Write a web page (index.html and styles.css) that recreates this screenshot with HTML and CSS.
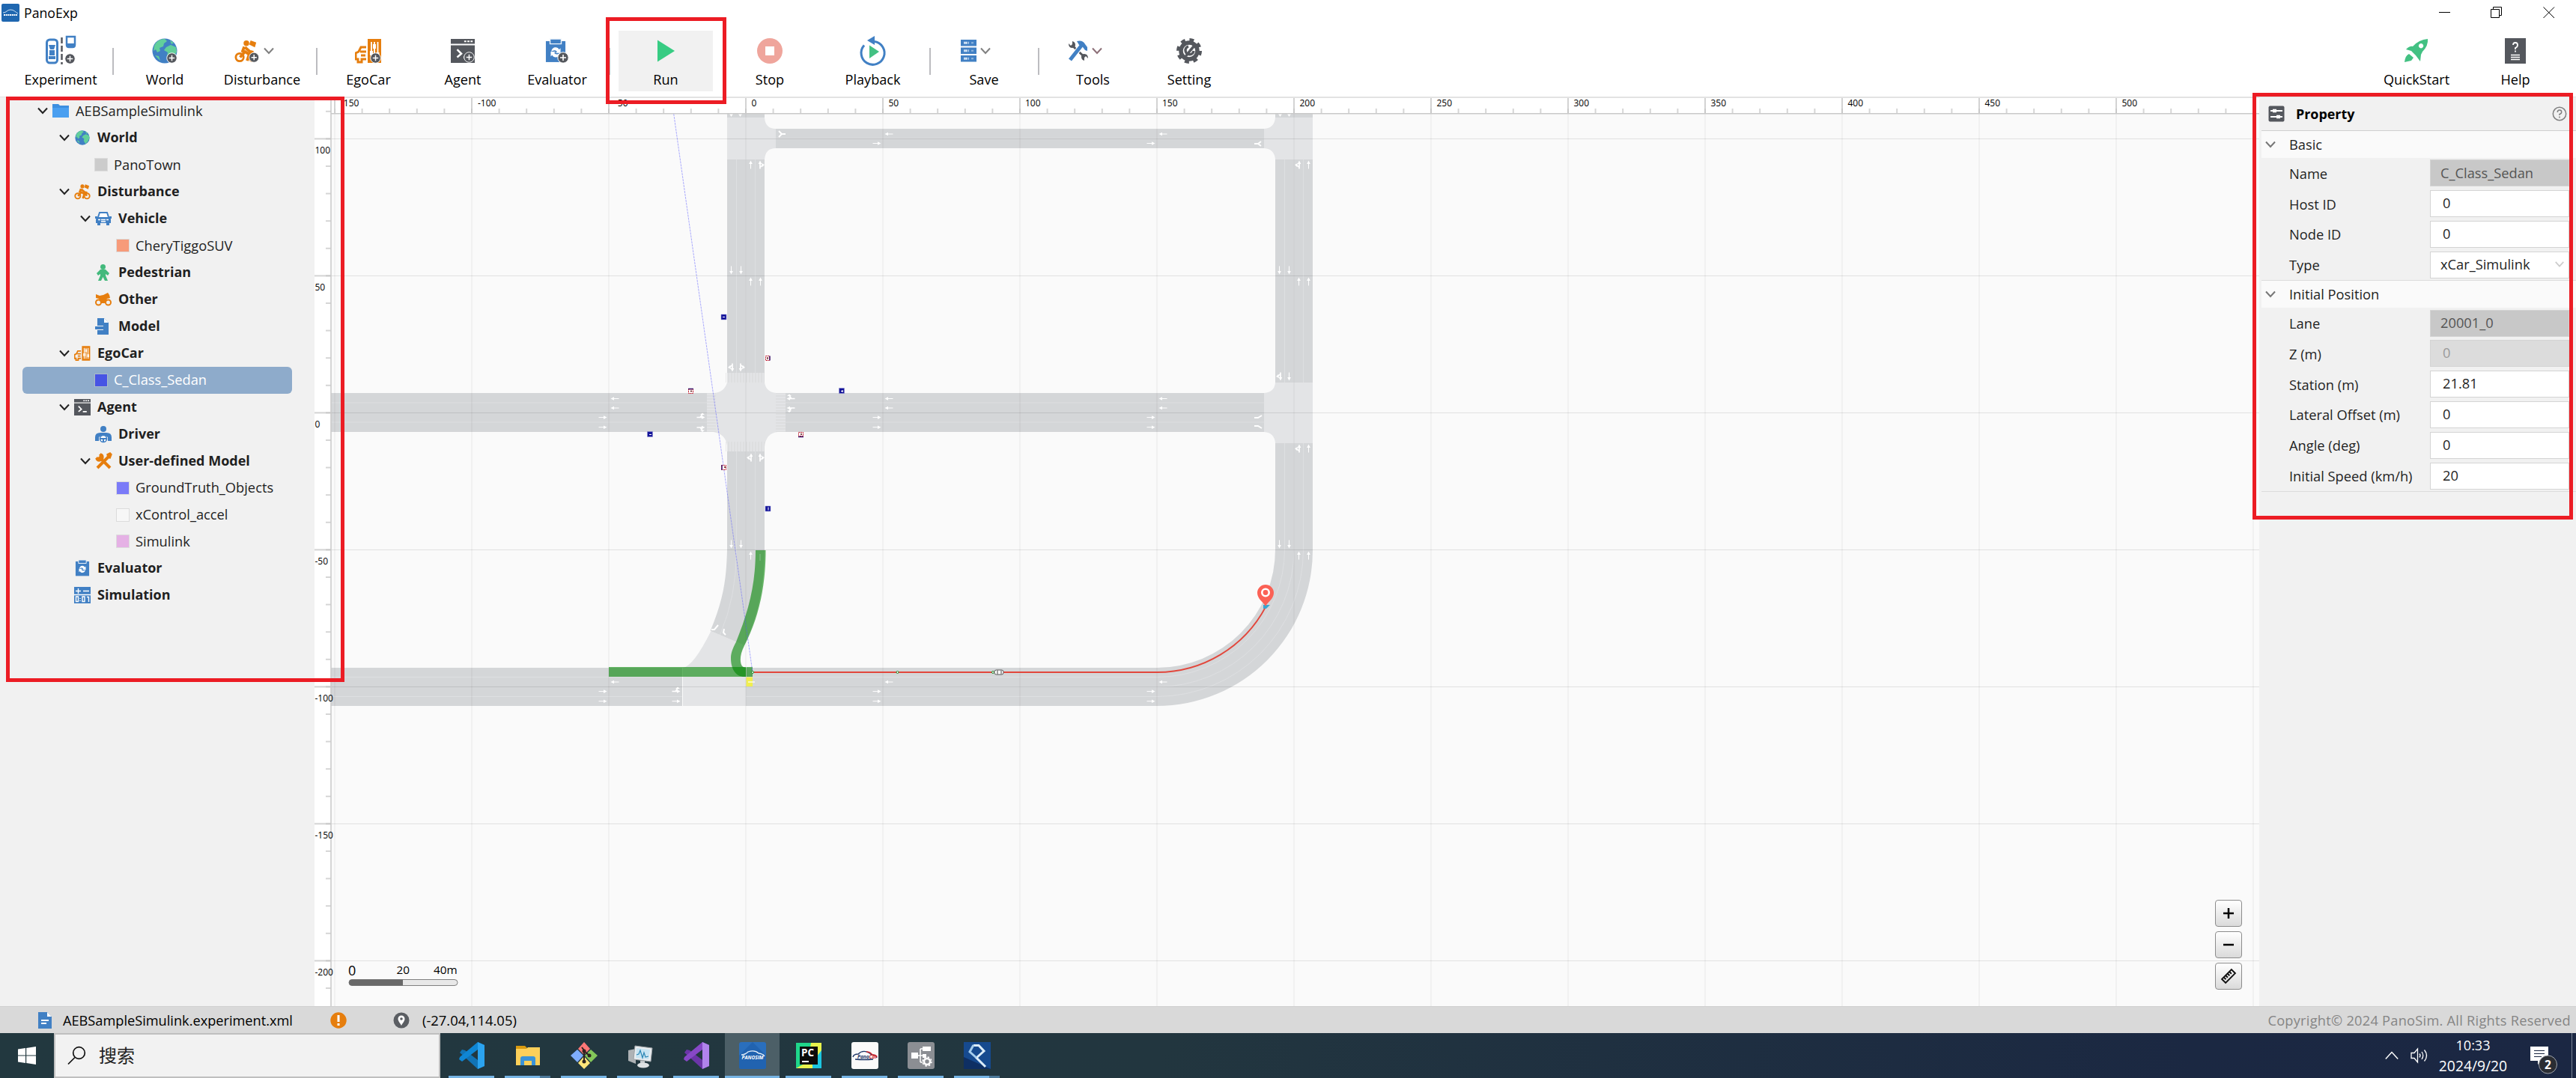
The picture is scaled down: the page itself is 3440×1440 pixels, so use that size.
FILE: index.html
```html
<!DOCTYPE html>
<html lang="en">
<head>
<meta charset="utf-8">
<title>PanoExp</title>
<link rel="stylesheet" href="styles.css">
</head>
<body>
<!-- Shared icon shapes -->
<svg class="defs" aria-hidden="true">
  <defs>
    <symbol id="globe" viewBox="0 0 34 34"><circle cx="17" cy="17" r="16.5" fill="#4180c4"/><path d="M3 10C6 4 11 1 17 1l3 3-4 3-1 4-5 2 1 4-4 2-2-4-3 2zM19 12l6-3 7 3 1 6-4 8-5 5-4-7 1-5-5-3zM24 3l5 3-3 2zM4 23l5 1 2 6z" fill="#62cf9b"/></symbol>
    <symbol id="plus" viewBox="0 0 16 16"><circle cx="8" cy="8" r="7.2" fill="#54575d" stroke="#fff"/><path d="M8 4v8M4 8h8" stroke="#fff" stroke-width="1.6"/></symbol>
    <symbol id="chev" viewBox="0 0 16 16"><path d="M2 4.500 8 11l6-6.500" fill="none" stroke="currentColor" stroke-width="2"/></symbol>
    <symbol id="cyclist" viewBox="0 0 34 34"><g fill="none" stroke="#e67e0e"><circle cx="7.500" cy="26" r="5.500" stroke-width="3"/><circle cx="26.500" cy="26" r="5.500" stroke-width="3"/><path d="M8 26l7-8 6 4-3 9M14 11l-3 8M15 12l7 6 5 1M26 26l-4-9" stroke-width="4" stroke-linejoin="round"/></g><circle cx="17" cy="6" r="4" fill="#e67e0e"/><path d="m23 2 8 3-2 7-8-4z" fill="#e67e0e"/></symbol>
    <symbol id="ego" viewBox="0 0 36 34"><path d="M17 1h18v32H17z" fill="#e67e0e"/><path d="M15 12H8L5 18l-4 2v8h3v4h5v-4h6M7 18h8M8 23h6" fill="none" stroke="#e67e0e" stroke-width="3"/><path d="M22 5v24M26 5v24M30.500 5v24" stroke="#fff" stroke-width="1.800"/><path d="M22 17v6M26 8v6M30.500 19v6" stroke="#fff" stroke-width="4"/></symbol>
    <symbol id="term" viewBox="0 0 34 34"><path d="M0 0h34v7H0zM0 9h34v25H0z" fill="#54575d"/><path d="M19 3.500h12" stroke="#fff" stroke-width="2" stroke-dasharray="3 1.500"/><path d="m9 15 6 6-6 5M18 26h8" fill="none" stroke="#fff" stroke-width="2.600"/></symbol>
    <symbol id="board" viewBox="0 0 30 34"><path d="M1 3h28v30H1z" fill="#4180c4"/><path d="M7 0h16v7H7z" fill="#4180c4" stroke="#eef4fa" stroke-width="1.500"/><path d="M9 18c0-7 9-8 11-3l2-2v7h-7l2-2c-2-3-6-2-8 0zM21 20c0 7-9 8-11 3l-2 2v-7h7l-2 2c2 3 6 2 8 0z" fill="#fff"/></symbol>
    <symbol id="doc" viewBox="0 0 20 22"><path d="M1 0h12l6 6v16H1z" fill="#4180c4"/><path d="M13 0v6h6z" fill="#fff"/><path d="M5 11h10M5 15h7" stroke="#fff" stroke-width="1.800"/></symbol>
    <symbol id="ar" viewBox="-6 -4 12 8" overflow="visible"><path d="M-5.500 0h8" stroke="#fff" stroke-width="1"/><path d="M1-2.300 5.500 0 1 2.300z" fill="#fff"/></symbol>
    <symbol id="turn" viewBox="-6 -6 12 12" overflow="visible"><path d="M-5.500 0h8M-1 0l3 4" stroke="#fff" stroke-width="1.600" fill="none"/><path d="M1-2.300 5.500 0 1 2.300zM-1 3.500h6L2 6z" fill="#fff"/></symbol>
    <symbol id="code" viewBox="0 0 36 36"><path d="m26 0 9 4v28l-9 4L2 14l3-4 4 1 17 13V0z" fill="var(--a)"/><path d="M26 0v10L5 26l-4-3 1-3z" fill="var(--b)"/><path d="m26 0 9 4v28l-9 4z" fill="var(--c)"/></symbol>
  </defs>
</svg>

<div class="app">
  <header class="titlebar">
    <svg class="logo" width="24" height="24" viewBox="0 0 24 24"><rect width="24" height="24" rx="2" fill="#1f67b0"/><path d="M2 12c5 0 5-4 10-4s6 3 10 5" fill="none" stroke="#cfe3f7"/><path d="M3 15h18" stroke="#fff" stroke-width="2" stroke-dasharray="2 .7"/></svg>
    <span>PanoExp</span>
    <div class="winbtns">
      <svg width="16" height="16"><path d="M0 7.500h15" stroke="#000"/></svg>
      <svg width="16" height="16"><path d="M.5 3.500h11v11H.5zM3.500 3V.5h11v11H12" fill="none" stroke="#000"/></svg>
      <svg width="16" height="16"><path d="m.5.5 14.500 14.500M15 .5.500 15" stroke="#000"/></svg>
    </div>
  </header>

  <nav class="toolbar">
    <div class="tool"><div class="ic"><svg width="40" height="38" viewBox="0 0 40 38"><rect x="1.500" y="4" width="14" height="31" rx="4" fill="none" stroke="#4180c4" stroke-width="3"/><path d="M4 11h9l-2 6H6zM4 30h9v-4H4zM5 18h7v7H5z" fill="#4180c4"/><path d="M28 0h11v11q0 3-3 3h-5q-3 0-3-3z" fill="none" stroke="#4180c4" stroke-width="2.500"/><path d="M29 9h9v4h-9z" fill="#4180c4"/><path d="M21.500 1v36" stroke="#54575d" stroke-width="2.500" stroke-dasharray="8 3"/><use href="#plus" x="25" y="22" width="15" height="15"/></svg></div>Experiment</div>
    <i class="sep"></i>
    <div class="tool"><div class="ic"><svg width="34" height="34"><use href="#globe" width="34" height="34"/><use href="#plus" x="19" y="19" width="15" height="15"/></svg></div>World</div>
    <div class="tool"><div class="ic drop"><svg width="36" height="32" viewBox="0 0 36 33"><use href="#cyclist" width="34" height="33"/><use href="#plus" x="20" y="18" width="15" height="15"/></svg><svg class="chev" width="18" height="16"><use href="#chev"/></svg></div>Disturbance</div>
    <i class="sep"></i>
    <div class="tool"><div class="ic"><svg width="37" height="35"><use href="#ego" width="36" height="34"/><use href="#plus" x="20" y="19" width="15" height="15"/></svg></div>EgoCar</div>
    <div class="tool"><div class="ic"><svg width="34" height="32" viewBox="0 0 34 34"><use href="#term" width="34" height="34"/><use href="#plus" x="18" y="18" width="16" height="16"/></svg></div>Agent</div>
    <div class="tool"><div class="ic"><svg width="32" height="34"><use href="#board" width="28" height="34"/><use href="#plus" x="16" y="18" width="16" height="16"/></svg></div>Evaluator</div>
    <i class="sep off"></i>
    <div class="tool active"><div class="ic"><svg width="24" height="32"><path d="M1 1.500 24 16 1 30.500z" fill="#37cc83"/></svg></div>Run</div>
    <div class="tool"><div class="ic"><svg width="34" height="34"><circle cx="17" cy="17" r="17" fill="#efa59c"/><path d="M11 11h12v12H11z" fill="#fff"/></svg></div>Stop</div>
    <div class="tool"><div class="ic"><svg width="36" height="40" viewBox="0 0 36 40"><path d="M20 7.500A15.500 15.500 0 1 1 6 12.500" fill="none" stroke="#4180c4" stroke-width="3"/><path d="m10 6 10-6v12z" fill="#4180c4"/><path d="M13 12.500 26 21 13 30z" fill="#43c183"/></svg></div>Playback</div>
    <i class="sep"></i>
    <div class="tool"><div class="ic drop"><svg width="22" height="30"><g fill="#4180c4"><path d="M0 0h21v8.500H0zM0 10.500h21V19H0zM0 21h21v8.500H0z"/></g><path d="M4 4.300h7M4 14.800h7M4 25.300h7" stroke="#c9ddf2" stroke-width="3" stroke-dasharray="5 1"/><path d="M14 4.300h3M14 14.800h3M14 25.300h3" stroke="#8fb6e0" stroke-width="2"/></svg><svg class="chev" width="18" height="16"><use href="#chev"/></svg></div>Save</div>
    <i class="sep"></i>
    <div class="tool"><div class="ic drop"><svg width="28" height="28" viewBox="0 0 28 28"><path d="m6 7 16 15" stroke="#54575d" stroke-width="3"/><path d="M1 4q0 6 5 6 4 0 4-4 0-4-4-5v4L4 7zM27 24q0-6-5-6-4 0-4 4 0 4 4 5v-4l2-2z" fill="#54575d"/><path d="M3 26.500 18 7" stroke="#fff" stroke-width="7"/><path d="M3 26 18 7" stroke="#4180c4" stroke-width="5"/><path d="M12 1q8-2 11 4l3 4v5l-3-1-3-4-5-3z" fill="#4180c4"/></svg><svg class="chev rd" width="18" height="16"><use href="#chev"/></svg></div>Tools</div>
    <div class="tool"><div class="ic"><svg width="34" height="34" viewBox="-17 -17 34 34"><circle r="14.500" fill="none" stroke="#54575d" stroke-width="5" stroke-dasharray="5.700 5.690"/><circle r="11" fill="none" stroke="#54575d" stroke-width="5.500"/><path d="M-4.500 7 1 0M-1-6a5.500 5.500 0 1 0 7 6M1 0l6-7" fill="none" stroke="#54575d" stroke-width="3.500"/></svg></div>Setting</div>
    <span></span>
    <div class="tool"><div class="ic"><svg width="32" height="32" viewBox="0 0 32 32"><path fill-rule="evenodd" d="M31 0q1 9-7 17l-2 4-1 9-6-8-6-6-7-2q5-5 9-4Q19 1 31 0zm-9 6a3.200 3.200 0 1 0 .1 0zM6 20l6 5-3 4-9 2q1-9 6-11z" fill="#43c183"/></svg></div>QuickStart</div>
    <div class="tool"><div class="ic"><svg width="28" height="34"><path d="M0 0h28v34H0z" fill="#54575d"/><path d="M11 9q0-3 3-3t3 3-3 4v2M14 16.500v2" fill="none" stroke="#fff" stroke-width="1.800"/><path d="M8 22.500h12M8 25.500h12M8 28.500h12" stroke="#fff" stroke-width="1.500"/></svg></div>Help</div>
  </nav>

  <main class="work">
    <aside class="tree">
      <div class="row l0"><svg class="exp"><use href="#chev"/></svg><svg class="nic" viewBox="0 0 22 22"><path d="M0 2h8l2 2h12v16H0z" fill="#3d8fe0"/><path d="M0 7h22v13H0z" fill="#4a9ff0"/></svg><span>AEBSampleSimulink</span></div>
      <div class="row l1 b"><svg class="exp"><use href="#chev"/></svg><svg class="nic"><use href="#globe" x="1" y="1" width="20" height="20"/></svg><span>World</span></div>
      <div class="row l2"><i class="sq grey"></i><span>PanoTown</span></div>
      <div class="row l1 b"><svg class="exp"><use href="#chev"/></svg><svg class="nic"><use href="#cyclist"/></svg><span>Disturbance</span></div>
      <div class="row l2 b"><svg class="exp"><use href="#chev"/></svg><svg class="nic" viewBox="0 0 22 22"><path d="m4 9 2-6h10l2 6" fill="#fff" stroke="#4180c4" stroke-width="2"/><path d="M2 9h18l1 3v5h-2v3h-4v-3H7v3H3v-3H1v-5zM0 8h3v3H0zM19 8h3v3h-3z" fill="#4180c4"/><path d="M4 12.500h3M15 12.500h3M8 12.500h6M8 15h6" stroke="#fff" stroke-width="1.300"/></svg><span>Vehicle</span></div>
      <div class="row l3"><i class="sq salmon"></i><span>CheryTiggoSUV</span></div>
      <div class="row n2 b"><svg class="nic" viewBox="0 0 22 22"><circle cx="10.500" cy="3.500" r="3.500" fill="#43b97c"/><path d="M7 7h7l5 5-2 3-3-2v2l3 7h-4l-2.500-5L8 22H4l3-7v-2l-3 2-2-3z" fill="#43b97c"/></svg><span>Pedestrian</span></div>
      <div class="row n2 b"><svg class="nic" viewBox="0 0 22 22"><g fill="none" stroke="#e67e0e" stroke-width="2"><circle cx="4.500" cy="15" r="3.500"/><circle cx="17.500" cy="15" r="3.500"/></g><path d="m1 4 5 2 5-1 6-3 2 3 1 4-4 1-3 6H8L5 10 1 9z" fill="#e67e0e"/></svg><span>Other</span></div>
      <div class="row n2 b"><svg class="nic" viewBox="0 0 22 22"><path d="M3 0h9l6 6v16H3v-6h8v-6H3z" fill="#4180c4"/><path d="M12 0v6h6z" fill="#fff"/><path d="M0 11h13v4H0z" fill="#4180c4"/></svg><span>Model</span></div>
      <div class="row l1 b"><svg class="exp"><use href="#chev"/></svg><svg class="nic"><use href="#ego"/></svg><span>EgoCar</span></div>
      <div class="row l2 sel"><i class="sq blue"></i><span>C_Class_Sedan</span></div>
      <div class="row l1 b"><svg class="exp"><use href="#chev"/></svg><svg class="nic"><use href="#term"/></svg><span>Agent</span></div>
      <div class="row n2 b"><svg class="nic" viewBox="0 0 22 22"><circle cx="11" cy="4" r="4" fill="#4180c4"/><path d="M0 20v-5q0-6 7-6h8q7 0 7 6v5h-5v-5q-6-5-12 0v5z" fill="#4180c4"/><circle cx="11" cy="17" r="4.500" fill="#fff" stroke="#4180c4" stroke-width="1.600"/><path d="M7 17h8M11 17v4" stroke="#4180c4" stroke-width="2"/></svg><span>Driver</span></div>
      <div class="row l2 b"><svg class="exp"><use href="#chev"/></svg><svg class="nic" viewBox="0 0 22 22"><path d="m4 4 16 16M3 20 18 5" stroke="#e67e0e" stroke-width="4"/><path d="M7 1a5 5 0 1 1-6 6M16 2l4-2 2 2-2 5-3-1z" fill="#e67e0e" stroke="#e67e0e" stroke-width="1.500"/><path d="m0 0 5 5" stroke="#f1f1f1" stroke-width="3"/></svg><span>User-defined Model</span></div>
      <div class="row l3"><i class="sq violet"></i><span>GroundTruth_Objects</span></div>
      <div class="row l3"><i class="sq white"></i><span>xControl_accel</span></div>
      <div class="row l3"><i class="sq pink"></i><span>Simulink</span></div>
      <div class="row n1 b"><svg class="nic"><use href="#board"/></svg><span>Evaluator</span></div>
      <div class="row n1 b"><svg class="nic" viewBox="0 0 22 22"><path d="M0 0h22v22H0z" fill="#4180c4"/><path d="M2 5.500h7M5.500 2v7M12 5.500h8M0 10.500h22M2.500 13h3v6.500h-3zM8 15v1M8 18v1M11 13h3v6.500h-3zM17 13.500h2.500V20" fill="none" stroke="#fff" stroke-width="1.400"/></svg><span>Simulation</span></div>
    </aside>

    <svg class="map" viewBox="420 130 2597 1214">
      <defs>
        <pattern id="gx" patternUnits="userSpaceOnUse" x="995" y="0" width="183" height="100"><path d="M1 0v100" stroke="#000" stroke-opacity=".035" stroke-width="2"/></pattern>
        <pattern id="gy" patternUnits="userSpaceOnUse" x="0" y="551" width="100" height="183"><path d="M0 .5h100" stroke="#000" stroke-opacity=".1"/></pattern>
        <pattern id="mx" patternUnits="userSpaceOnUse" x="995" y="0" width="36.600" height="2000"><path d="M1 145v7" stroke="#c4c4c4" stroke-width="1.400"/></pattern>
        <pattern id="Mx" patternUnits="userSpaceOnUse" x="995" y="0" width="183" height="2000"><path d="M1 130v22" stroke="#c4c4c4" stroke-width="1.500"/></pattern>
        <pattern id="my" patternUnits="userSpaceOnUse" x="0" y="550.400" width="2000" height="36.600"><path d="M435 1h7" stroke="#c4c4c4" stroke-width="1.400"/></pattern>
        <pattern id="My" patternUnits="userSpaceOnUse" x="0" y="550.400" width="2000" height="183"><path d="M420 1h22" stroke="#c4c4c4" stroke-width="1.500"/></pattern>
        <pattern id="zv" patternUnits="userSpaceOnUse" width="4" height="20"><path d="M1 0v20" stroke="#d7d8d9"/></pattern>
        <pattern id="zh" patternUnits="userSpaceOnUse" width="20" height="4"><path d="M0 1h20" stroke="#d7d8d9"/></pattern>
      </defs>
      <rect x="420" y="130" width="2597" height="1214" fill="#fafafa"/>
      <!-- Junction surfaces -->
      <g fill="#e3e4e6">
        <path d="M971 157h50q1 15 15 15v26q-14 0-15 15h-50z"/>
        <path d="M971 498h50v13q2 13 16 14h12v52h-10q-16 1-18 20v6h-50v-8q-2-15-18-18h-9v-52h10q13-1 17-14v-13z"/>
        <path d="M1753 157h-50q-1 14-15 15v26q14 1 15 15h50z"/>
        <path d="M1753 511h-50q-1 13-15 14v52q14 1 15 15h50z"/>
        <path d="m948.600 842.700 45.400 19.300q-8 14-5 24 3 6 8 6v51h-85v-51q14-2 37.600-49.300z"/>
      </g>
      <!-- Road surfaces -->
      <g fill="#d4d6d8">
        <path d="M971 152h50v5h-50zM1703 152h50v5h-50zM1036 172h652v26h-652zM971 213h50v285h-50z"/>
        <path d="M442 525h502v52H442zM1049 525h639v52h-639zM1703 213h50v298h-50z"/>
        <path d="M971 603h50v132c-1 55-9 88-27 127l-45.400-19.300C967 799 970 771 971 735z"/>
        <path d="M442 892h469v51H442zM996 892h549a158 158 0 0 0 158-158V592h50v142a208 208 0 0 1-208 209H996z"/>
      </g>
      <path d="M969 498h52v13h-52zM969 590h52v13h-52z" fill="url(#zv)"/>
      <path d="M944 525h12v52h-12zM1036 525h13v52h-13z" fill="url(#zh)"/>
      <!-- Lane dividers -->
      <g fill="none" stroke="#dfe1e3" stroke-width=".8">
        <path d="M983.500 213v285M996 213v285M1008.500 213v285M983.500 603v132q0 62-22 113M996 603v132M1008.500 603v132M1715.500 213v298M1728 213v298M1740.500 213v298"/>
        <path d="M442 538h502M442 564h502M1049 538h639M1049 564h639M1036 185h652M442 904.500h469M442 930.500h469M996 904.500h549a170.500 170.500 0 0 0 170.500-170.500V592M996 917.500h549a183 183 0 0 0 183-183V592M996 930.500h549a196 196 0 0 0 195.500-196V592"/>
      </g>
      <!-- Lane arrows -->
      <g>
        <g id="lanes1"><use href="#ar" x="1165" y="553.600" width="12" height="8"/><use href="#ar" x="1165" y="566.700" width="12" height="8"/></g>
        <use href="#lanes1" x="-366"/><use href="#lanes1" x="366"/><use href="#lanes1" y="366"/><use href="#lanes1" x="-366" y="366"/><use href="#lanes1" x="366" y="366"/>
        <use href="#ar" x="1165" y="187.500" width="12" height="8"/><use href="#ar" x="1531" y="187.500" width="12" height="8"/>
        <use href="#ar" x="897" y="932.700" width="12" height="8"/>
        <g id="lanes2"><g transform="translate(1187 545) rotate(180)"><path d="M-5.500 0h8" stroke="#fff"/><path d="M1-2.300 5.500 0 1 2.300z" fill="#fff"/></g></g>
        <use href="#lanes2" y="-12.500"/><use href="#lanes2" x="-366"/><use href="#lanes2" x="-366" y="-12.500"/><use href="#lanes2" x="366"/><use href="#lanes2" x="366" y="-12.500"/><use href="#lanes2" y="366"/><use href="#lanes2" x="-366" y="366"/><use href="#lanes2" x="366" y="366"/><use href="#lanes2" y="-366"/><use href="#lanes2" x="366" y="-366"/>
        <g id="up"><g transform="translate(1002.500 376) rotate(-90)"><path d="M-5.500 0h8" stroke="#fff"/><path d="M1-2.300 5.500 0 1 2.300z" fill="#fff"/></g></g>
        <use href="#up" x="13"/><use href="#up" x="732"/><use href="#up" x="745"/><use href="#up" y="366"/><use href="#up" x="732" y="366"/><use href="#up" x="745" y="366"/><use href="#up" y="-156"/><use href="#up" x="745" y="-156"/><use href="#up" x="745" y="223"/>
        <g id="dn"><g transform="translate(976.500 361) rotate(90)"><path d="M-5.500 0h8" stroke="#fff"/><path d="M1-2.300 5.500 0 1 2.300z" fill="#fff"/></g></g>
        <use href="#dn" x="13"/><use href="#dn" x="732"/><use href="#dn" x="745"/><use href="#dn" y="366"/><use href="#dn" x="13" y="366"/><use href="#dn" x="732" y="366"/><use href="#dn" x="745" y="366"/><use href="#dn" x="745" y="142"/>
        <path d="m974 152 2.500 4 2.500-4zM986 152l2.500 4 2.500-4zM1707 152l2.500 4 2.500-4zM1719 152l2.500 4 2.500-4z" fill="#fff"/>
        <g id="tr"><g transform="translate(1015 220) rotate(-90)"><path d="M-5.500 0h8M-3 1l3 3" stroke="#fff" stroke-width="1.700"/><path d="M1-2.300 5.500 0 1 2.300zM-3 3l5-1-2 4z" fill="#fff"/></g></g>
        <use href="#tr" y="391"/>
        <g id="tl"><g transform="translate(1735 220) rotate(-90) scale(1 -1)"><path d="M-5.500 0h8M-3 1l3 3" stroke="#fff" stroke-width="1.700"/><path d="M1-2.300 5.500 0 1 2.300zM-3 3l5-1-2 4z" fill="#fff"/></g></g>
        <use href="#tl" y="379"/><use href="#tl" x="-732" y="391"/>
        <g id="dl"><g transform="translate(978 491) rotate(90)"><path d="M-5.500 0h8M-3 1l3 3" stroke="#fff" stroke-width="1.700"/><path d="M1-2.300 5.500 0 1 2.300zM-3 3l5-1-2 4z" fill="#fff"/></g></g>
        <use href="#dl" x="732" y="12"/>
        <g transform="translate(989 491) rotate(90) scale(1 -1)"><path d="M-5.500 0h8M-3 1l3 3" stroke="#fff" stroke-width="1.700"/><path d="M1-2.300 5.500 0 1 2.300zM-3 3l5-1-2 4z" fill="#fff"/></g>
        <use href="#turn" x="930" y="565" width="12" height="12"/>
        <g transform="translate(936 557.500) scale(1 -1)"><use href="#turn" x="-6" y="-6" width="12" height="12"/></g>
        <g transform="translate(903 923.500) scale(1 -1)"><use href="#turn" x="-6" y="-6" width="12" height="12"/></g>
        <g transform="translate(1056 532.500) scale(-1)"><use href="#turn" x="-6" y="-6" width="12" height="12"/></g>
        <g transform="translate(1056 545) scale(-1 1)"><use href="#turn" x="-6" y="-6" width="12" height="12"/></g>
        <path d="M1049 179h-5l-4-4M1044 179l-4 4M1675 192h5l4-3M1680 192l4 3M1675 558h5l5-3M1675 569h5l5 3M959 835l-5 6h-4M967 840l-1 5 3 3" fill="none" stroke="#fff" stroke-width="2"/>
      </g>
      <rect x="442" y="152" width="2575" height="1192" fill="url(#gx)"/>
      <rect x="442" y="152" width="2575" height="1192" fill="url(#gy)"/>
      <!-- Planned route -->
      <g fill="#008400" fill-opacity=".59">
        <path d="M1009 735h13.500c0 50-10 92-28.500 127.500-5 10-6 18-4.500 24 1 4 3 5 6.500 5v12.500c-13 1-20-10-20-25 0-7 3-14 7-21.500 16-40 26-75 26-122.500z"/>
        <path d="M813 891h183v13H813zM996.500 891h8.500v13h-8.500z"/>
      </g>
      <path d="M996.500 904.500h8.500V917h-8.500z" fill="#f0ee50"/><path d="M999 911h9" stroke="#fff" stroke-width="1.200"/>
      <path d="M1015 740v9" stroke="#86bd8a"/>
      <path d="M1005 898h540a164 164 0 0 0 145-87" fill="none" stroke="#e2473c" stroke-width="1.800"/>
      <path d="M899.700 152 1005 898" stroke="#5a5aff" stroke-opacity=".5" stroke-width="1" stroke-dasharray="3 1"/>
      <g fill="#fff" stroke="#218a2b"><circle cx="1005" cy="898" r="1.500"/><circle cx="1198.500" cy="898" r="1.500"/><circle cx="1326" cy="898" r="1.500"/></g>
      <rect x="1328" y="895" width="12" height="6" rx="2.500" fill="#fff" stroke="#555"/><path d="M1332 895.500v5M1337 895.500v5" stroke="#444"/>
      <path d="M1687 808h9l-5 5h-4z" fill="#38a6d0"/>
      <path d="M1690 810c-3-6-11-10-11-18a11 11 0 0 1 22 0c0 8-8 12-11 18z" fill="#fb6155"/><circle cx="1690" cy="791.500" r="4.700" fill="#fb6155" stroke="#fff" stroke-width="2.600"/>
      <!-- Roadside signs and lights -->
      <g fill="#15159a" stroke="#8f8fd0" stroke-width=".5"><path d="M963 420h7v7h-7zM1120.500 518.500h7v7h-7zM864.500 576.500h7v7h-7zM1022 676h7v7h-7z"/></g>
      <path d="M965 423.500h3M1123 522.500h3M1125 521v3M867 580.500h3M1026 677.500v4" stroke="#fff"/>
      <g fill="#fff" stroke="#c22033" stroke-dasharray="2 .7"><path d="M1022.500 475.500h5v6h-5zM919.500 520h6v5.500h-6zM1066.500 577.500h6v5h-6zM963.500 621.500h6v6h-6z"/></g>
      <path d="M1028 475.500v6M919 519.500h7M1066 583.500h7M964 621v7" stroke="#3b1268" stroke-width="1.500"/><path d="M1025 477v3M922 522.500h2M1069 580h2M967 624h2" stroke="#511" stroke-width="1.300"/>
      <!-- Rulers -->
      <rect x="442" y="130" width="2575" height="22" fill="#fff"/><rect x="420" y="130" width="22" height="1214" fill="#fff"/>
      <rect x="447" y="130" width="2570" height="22" fill="url(#mx)"/><rect x="446" y="130" width="2571" height="22" fill="url(#Mx)"/>
      <rect x="420" y="134" width="22" height="1210" fill="url(#my)"/><rect x="420" y="152" width="22" height="1192" fill="url(#My)"/>
      <path d="M442 151.700h2575M442 134v1210" stroke="#c9c9c9" stroke-width="1.500"/>
      <path d="M420 130.500h2597" stroke="#e3e3e3"/>
      <g class="rl">
        <text x="455" y="141.500">-150</text><text x="638" y="141.500">-100</text><text x="821" y="141.500">-50</text><text x="1003.500" y="141.500">0</text><text x="1186.500" y="141.500">50</text><text x="1369" y="141.500">100</text><text x="1552" y="141.500">150</text><text x="1735.500" y="141.500">200</text><text x="1918.500" y="141.500">250</text><text x="2101.500" y="141.500">300</text><text x="2284.500" y="141.500">350</text><text x="2467.500" y="141.500">400</text><text x="2650.500" y="141.500">450</text><text x="2833.500" y="141.500">500</text>
        <text x="420.500" y="205">100</text><text x="420.500" y="388">50</text><text x="420.500" y="571">0</text><text x="420.500" y="754">-50</text><text x="420.500" y="937">-100</text><text x="420.500" y="1120">-150</text><text x="420.500" y="1303">-200</text>
      </g>
      <!-- Scale bar -->
      <g class="sc"><text x="465" y="1303" font-size="18">0</text><text x="529.500" y="1301">20</text><text x="579" y="1301">40m</text></g>
      <rect x="466" y="1308.500" width="145" height="8" rx="4" fill="#e8e8e8" stroke="#808080"/><path d="M538 1308.500h-68a4 4 0 0 0 0 8h68z" fill="#696969"/>
    </svg>
    <div class="zoom">
      <button><svg width="18" height="18"><path d="M2 9h14M9 2v14" stroke="#000" stroke-width="2.500"/></svg></button>
      <button><svg width="18" height="18"><path d="M2 9h14" stroke="#000" stroke-width="2.500"/></svg></button>
      <button><svg width="22" height="22" viewBox="-11 -11 22 22"><g transform="rotate(-45)"><path d="M-9-3.500H9v7H-9zM-5.500-3.500v4M-2-3.500v4M1.500-3.500v4M5-3.500v4" fill="none" stroke="#111" stroke-width="2"/></g></svg></button>
    </div>

    <aside class="props">
      <div class="phead"><svg width="22" height="22"><rect width="21" height="21" x=".5" y=".5" rx="2" fill="#54575d"/><path d="M3 7h16M3 15h16" stroke="#fff" stroke-width="1.800"/><path d="M6 7h5M11 15h5" stroke="#fff" stroke-width="4.500"/></svg><b>Property</b><svg class="q" width="20" height="20"><circle cx="10" cy="10" r="8.700" fill="none" stroke="#808080" stroke-width="1.500"/><path d="M7.300 8q0-3 2.700-3t2.700 2.500-2.700 3V12M10 13.500v2" fill="none" stroke="#808080" stroke-width="1.500"/></svg></div>
      <section>
        <h3><svg width="18" height="16"><use href="#chev"/></svg><span>Basic</span></h3>
        <div class="f"><label>Name</label><span class="v ro">C_Class_Sedan</span></div>
        <div class="f"><label>Host ID</label><span class="v n">0</span></div>
        <div class="f"><label>Node ID</label><span class="v n">0</span></div>
        <div class="f"><label>Type</label><span class="v">xCar_Simulink<svg width="14" height="14"><use href="#chev"/></svg></span></div>
      </section>
      <section>
        <h3><svg width="18" height="16"><use href="#chev"/></svg><span>Initial Position</span></h3>
        <div class="f"><label>Lane</label><span class="v ro">20001_0</span></div>
        <div class="f"><label>Z (m)</label><span class="v n dis">0</span></div>
        <div class="f"><label>Station (m)</label><span class="v n">21.81</span></div>
        <div class="f"><label>Lateral Offset (m)</label><span class="v n">0</span></div>
        <div class="f"><label>Angle (deg)</label><span class="v n">0</span></div>
        <div class="f"><label>Initial Speed (km/h)</label><span class="v n">20</span></div>
      </section>
    </aside>
  </main>

  <footer class="status">
    <svg width="20" height="22"><use href="#doc"/></svg><span class="file">AEBSampleSimulink.experiment.xml</span>
    <svg class="warn" width="22" height="22"><circle cx="11" cy="11" r="10.700" fill="#e67e0e"/><path d="M11 4v9M11 15v3" stroke="#fff" stroke-width="3"/></svg>
    <svg class="loc" width="22" height="22"><circle cx="11" cy="11" r="10.500" fill="#5b5e63"/><path d="M11 18C9 14 6.500 12 6.500 9a4.500 4.500 0 0 1 9 0c0 3-2.500 5-4.500 9z" fill="#fff"/><circle cx="11" cy="9" r="1.800" fill="#5b5e63"/></svg><span class="pos">(-27.04,114.05)</span>
    <span class="copy">Copyright© 2024 PanoSim. All Rights Reserved</span>
  </footer>

  <footer class="taskbar">
    <div class="start"><svg width="24" height="24"><path d="m0 3.500 10-1.400v9.300H0zM11.200 2 24 0v11.400H11.200zM0 12.600h10v9.300L0 20.500zM11.200 12.600H24V24l-12.800-2z" fill="#fff"/></svg></div>
    <div class="search"><svg width="26" height="26"><circle cx="15.500" cy="9.500" r="7.800" fill="none" stroke="#111" stroke-width="1.700"/><path d="M10 15.500 1 24.500" stroke="#111" stroke-width="1.700"/></svg><span>搜索</span></div>
    <div class="apps">
      <div class="app-btn vs"><svg width="36" height="36"><use href="#code"/></svg></div>
      <div class="app-btn multi"><svg width="32" height="36" viewBox="0 0 32 36"><path d="M0 5h12l3 3v4H0z" fill="#d99a10"/><path d="M0 9h14l2-2h16v24H0z" fill="#fdd05a"/><path d="M6 31V22q0-3 3-3h14q3 0 3 3v9h-5v-6H11v6z" fill="#3a93d8"/></svg></div>
      <div class="app-btn"><svg width="36" height="36"><path d="m18 0 8 9-8 8-8-8z" fill="#f77"/><path d="m9 10 8 8-8 9-9-9z" fill="#7eaeff"/><path d="m27 10 9 8-9 9-8-9z" fill="#84c75a"/><path d="m18 19 8 9-8 8-8-8z" fill="#ffe57a"/><path d="M15 7l3 4v16M18 12l7 6" fill="none" stroke="#2d2420" stroke-width="2"/><g fill="#2d2420"><circle cx="18" cy="12" r="2.500"/><circle cx="25" cy="18" r="2.500"/><circle cx="18" cy="26" r="2.500"/></g></svg></div>
      <div class="app-btn"><svg width="36" height="36"><path d="M2 11 12 9v20L2 25z" fill="#aeb2b5"/><path d="m11 5 23 3-2 18-23-3z" fill="#e9edf0" stroke="#9aa0a4"/><path d="m13 8 18 2-2 13-17-2z" fill="#c8e4f2"/><path d="m13 17 3-1 2-5 3 10 2-7 2 6 4-1" fill="none" stroke="#2b86b5" stroke-width="1.200"/><path d="M18 25h6v4h-6z" fill="#c3c7ca"/><ellipse cx="22" cy="31" rx="8" ry="3.500" fill="#dfe2e4"/></svg></div>
      <div class="app-btn vsp"><svg width="36" height="36"><use href="#code"/></svg></div>
      <div class="app-btn on"><svg width="36" height="36"><rect width="36" height="36" rx="3" fill="#2a6fbd"/><path d="M0 18 18 0l18 18v15q0 3-3 3H3q-3 0-3-3z" fill="#1d5ba6" opacity=".6"/><path d="M3 17q5 0 9-4 9-3 14 2 7 1 8 4" fill="none" stroke="#e6f1fb" stroke-width="1.300"/><text x="18" y="23" text-anchor="middle" textLength="29" font-size="6.500" font-weight="bold" font-style="italic" fill="#fff">PANOSIM</text></svg></div>
      <div class="app-btn"><svg width="34" height="34"><path d="M0 0h34v34H0z" fill="#1fd68b"/><path d="M20 0h14v22L18 12z" fill="#e7f24c"/><path d="M34 10v24H16z" fill="#1cc5e0"/><path d="M0 34h22V22z" fill="#e7f24c"/><path d="M5 5h24v24H5z" fill="#0b0b0b"/><text x="7" y="18" font-size="13.500" font-weight="bold" fill="#fff">PC</text><path d="M8 25h9" stroke="#fff" stroke-width="2"/></svg></div>
      <div class="app-btn"><svg width="36" height="36"><rect width="36" height="36" rx="3" fill="#fafafa"/><path d="M2 20q1-4 7-4 6-6 14-2l4 3q6 0 7 4M5 23q12 1 24 0" fill="none" stroke="#1d3768" stroke-width="1.400"/><path d="M20 13q5 0 8 4 5 0 6 3" fill="none" stroke="#d3272e" stroke-width="1.400"/><text x="8" y="22" font-size="6.500" font-weight="bold" font-style="italic" fill="#1d3768">Pano<tspan fill="#d3272e">Car</tspan></text></svg></div>
      <div class="app-btn"><svg width="36" height="36"><rect width="36" height="36" rx="3" fill="#8b8e93"/><path d="M5 14h9v8H5zM20 6h11v6H20zM20 16h5v5h-5z" fill="#fff"/><path d="M14 18h6M17 9v18M17 9h4M17 27h3" stroke="#fff" stroke-width="1.500" fill="none"/><circle cx="26" cy="26" r="4" fill="none" stroke="#fff" stroke-width="2.500"/><circle cx="26" cy="26" r="6" fill="none" stroke="#fff" stroke-width="1.500" stroke-dasharray="2.400 2.300"/></svg></div>
      <div class="app-btn multi"><svg width="36" height="36"><path d="M0 0h36v36H0z" fill="#164a8f"/><path d="M0 36V20l36 16z" fill="#0e2f63"/><path d="M13 4.500h7l7 7.500-10 9 12 12" fill="none" stroke="#dcecf8" stroke-width="3"/><path d="M13 4 8 13l9 8" fill="none" stroke="#a5cdec" stroke-width="3"/></svg></div>
    </div>
    <div class="tray">
      <svg width="18" height="12"><path d="m.8 10.500 8.200-9 8.200 9" fill="none" stroke="#fff" stroke-width="1.500"/></svg>
      <svg class="spk" width="24" height="20"><path d="M1 6.500h4L9.500 1v18L5 13.500H1zM12 7.500q2 2.500 0 5M15 5q3.500 5 0 10M18.500 2.500q6 7.500 0 15" fill="none" stroke="#fff" stroke-width="1.300"/></svg>
      <div class="clock"><span class="t">10:33</span><span class="d">2024/9/20</span></div>
      <svg class="note" width="38" height="38"><path d="M0 0h24v19H15l-5 5v-5H0z" fill="#fff"/><path d="M5 5.500h14M5 9.500h14M5 13.500h10" stroke="#1b2842" stroke-width="1.200"/><circle cx="23.500" cy="24" r="12" fill="#2a2d33" stroke="#a0a4ab"/><text x="19" y="29.500" font-size="15.500" font-weight="bold" fill="#fff">2</text></svg>
      <i class="peek"></i>
    </div>
  </footer>
</div>

<!-- Highlight frames over the window -->
<div class="mark m-tree"></div>
<div class="mark m-run"></div>
<div class="mark m-prop"></div>
</body>
</html>
```
FILE: styles.css
```css
* { box-sizing: border-box; }
body { margin: 0; background: #fff; font: 18.3px "Open Sans", "Noto Sans", "Noto Sans CJK SC", sans-serif; color: #000; }
svg { display: block; flex: none; overflow: visible; }
.defs { position: absolute; width: 0; height: 0; }
.app { width: 3440px; height: 1440px; display: grid; grid-template-rows: 34px 96px 1214px 36px 60px; overflow: hidden; }

.titlebar { display: flex; align-items: center; padding-left: 2px; font-size: 17.7px; }
.titlebar span { margin-left: 6px; }
.winbtns { margin-left: auto; display: flex; gap: 54px; padding-right: 28px; }
.winbtns svg { width: 16px; }
.winbtns svg:first-child { margin-right: -1px; }

.toolbar { display: grid; grid-template-columns: 126px 13px 126px 134px 12px 126px 126px 126px 19px 126px 152px 123px 29px 116px 30px 115px 142px 1fr 132px 132px; padding: 0 15px 0 18px; border-bottom: 1px solid #e3e3e3; }
.tool { display: flex; flex-direction: column; align-items: center; line-height: 24px; padding-top: 11px; height: 88px; font-size: 18.1px; }
.tool .ic { height: 46px; display: flex; align-items: center; margin-bottom: 3px; }
.tool .drop { padding-right: 20px; gap: 2px; }
.tool.active { background: linear-gradient(#f1f1f1, #f1f1f1) 0 7px / 100% 81px no-repeat; }
.chev { color: #808080; }
.chev.rd { color: #8d7078; }
.sep { width: 2px; height: 36px; background: #bcbcc0; justify-self: center; margin-top: 30px; }
.sep.off { justify-self: start; margin-left: 6px; }

.work { display: grid; grid-template-columns: 420px 2597px 423px; position: relative; }
.tree { background: #f1f1f1; padding-top: .5px; color: #1f1f1f; }
.row { height: 35.95px; display: flex; align-items: center; white-space: nowrap; }
.row span { padding-bottom: 2px; }
.row.b { font-weight: bold; font-size: 18px; }
.row .exp { width: 16px; height: 16px; margin-right: 3px; color: #222; }
.nic { width: 22px; height: 22px; margin-right: 9px; }
.l0 { padding-left: 49px; } .l0 .exp { margin-right: 5px; }
.l1 { padding-left: 78px; } .l1 .exp { margin-right: 5px; }
.l2 { padding-left: 127px; }
.l2.b { padding-left: 106px; } .l2.b .exp { margin-right: 5px; }
.l3 { padding-left: 156px; }
.n1 { padding-left: 99px; }
.n2 { padding-left: 127px; }
.sq { width: 16px; height: 16px; margin-right: 9px; box-shadow: 0 0 0 1px rgba(200,200,200,.5); }
.grey { background: #ccc; } .salmon { background: #f79b7a; } .blue { background: #4754e4; }
.violet { background: #7b7bf8; } .white { background: #f7f7f7; } .pink { background: #e5b1e5; }
.sel { margin: 0 30px; padding-left: 97px; background: #8eabcb; color: #fff; border-radius: 6px; }

.map { width: 2597px; height: 1214px; }
.rl { font-size: 12px; }
.sc { font-size: 15.3px; }
.zoom { position: absolute; left: 2958px; top: 1072px; display: grid; gap: 6px; }
.zoom button { width: 36px; height: 36px; padding: 0; display: grid; place-items: center; border: 1.5px solid #8c8c8c; border-radius: 4px; background: linear-gradient(#fff, #dadada); }

.props { background: #f1f1f1; padding-left: 3px; color: #1f1f1f; }
.phead { height: 45px; display: flex; align-items: center; padding: 0 12px 0 9px; border-bottom: 1px solid #d0d0d0; color: #000; }
.phead b { margin-left: 15px; font-size: 17.9px; }
.phead .q { margin-left: auto; }
.props section { border-bottom: 1px solid #dcdcdc; }
.props h3 { margin: 0; height: 36px; background: #fafafa; font: inherit; display: flex; align-items: center; padding-left: 3px; }
.props h3 span { padding-bottom: 1px; }
.props h3 svg { color: #777; margin-right: 16px; stroke-width: 3; }
.f { height: 40.8px; display: grid; grid-template-columns: 188px 186px; align-items: center; padding-left: 37px; }
.v { height: 36px; border: 1px solid #d4d4d4; background: #fff; display: flex; align-items: center; padding: 0 5px 2px 13px; }
.v.n { padding-left: 16px; padding-bottom: 3px; }
.v svg { margin-left: auto; color: #ccc; }
.v.ro { background: #c8c8c8; color: #555; }
.v.dis { background: #dcdcdc; color: #9a9a9a; }

.status { background: #d9d9d9; display: flex; align-items: center; padding: 0 7px 0 50px; font-size: 18.2px; border-top: 1px solid #cfcfcf; }
.file { margin-left: 14px; width: 307px; white-space: nowrap; }
.pos { font-size: 18.4px; }
.warn { margin-left: 50px; }
.loc { margin-left: 62px; margin-right: 17px; }
.copy { margin-left: auto; color: #858585; letter-spacing: .27px; }

.taskbar { background: linear-gradient(90deg, #22383f, #22363f 45%, #1b2842 85%, #1b2743); display: flex; color: #fff; }
.start { width: 72px; display: grid; place-items: center; }
.search { width: 516px; background: #f2f2f2; border: 2px solid #bfbfbf; display: flex; align-items: center; padding-left: 16px; color: #222; font-size: 24px; }
.search span { margin-left: 16px; line-height: 30px; }
.apps { display: flex; margin-left: 5px; }
.app-btn { width: 73px; margin-right: 2px; display: grid; place-items: center; background: linear-gradient(#76b4e4, #76b4e4) 50% 100% / 61px 3px no-repeat; }
.app-btn.multi { background: linear-gradient(90deg, #76b4e4 47px, #4c7899 47px) 50% 100% / 61px 3px no-repeat; }
.app-btn.on { background: linear-gradient(#76b4e4, #76b4e4) 0 100% / 100% 3px no-repeat #4c5f67; }
.vs { --a: #1173b5; --b: #0f86d4; --c: #2ba3ef; }
.vsp { --a: #6b35a8; --b: #8748c7; --c: #b183ec; }
.tray { margin-left: auto; display: flex; align-items: center; }
.spk { margin-left: 16px; margin-right: 13px; }
.clock { width: 94px; height: 60px; display: grid; grid-template-rows: 28px 28px; justify-items: center; align-content: center; line-height: 28px; font-size: 18px; }
.clock .d { font-size: 19.3px; }
.note { margin-left: 29px; margin-top: 14px; }
.peek { width: 1.5px; height: 60px; background: #7b8595; margin-left: 17px; margin-right: 5px; }

.mark { position: absolute; border: 5px solid #ec1c24; }
.m-tree { left: 8px; top: 129px; width: 452px; height: 782px; }
.m-run { left: 809px; top: 23px; width: 161px; height: 116px; }
.m-prop { left: 3008px; top: 124px; width: 428px; height: 570px; }
```
